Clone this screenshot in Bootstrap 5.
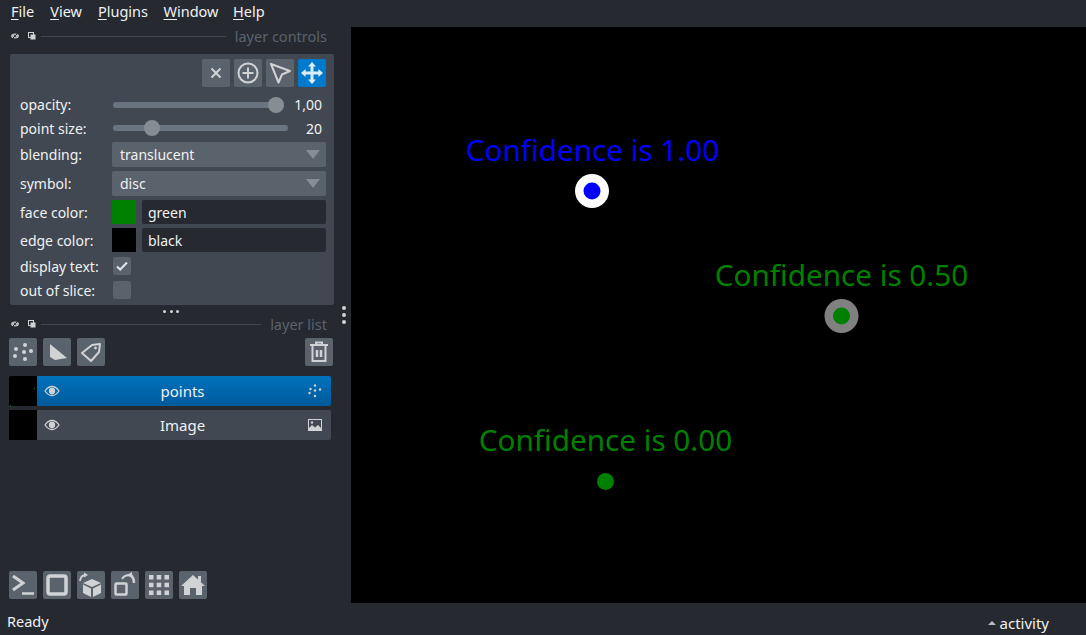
<!doctype html>
<html lang="en"><head><meta charset="utf-8"><title>napari</title>
<link rel="stylesheet" href="https://cdn.jsdelivr.net/npm/bootstrap@5.3.0/dist/css/bootstrap.min.css">
<style>
html,body{height:635px;overflow:hidden}
body{background:#262930;color:#f0f1f2;font-family:"Noto Sans",sans-serif;font-size:14px;line-height:20px}
.menu-bar{height:27px;padding-left:11px;padding-bottom:5px;font-size:14.5px}
.menu-bar span{color:#f0f1f2;margin-right:15.500px}
.menu-bar span:nth-child(2){margin-left:.5px}
.menu-bar span:nth-child(3){margin-left:.5px}
.menu-bar span:nth-child(4){margin-right:14.500px}
.menu-bar u{text-underline-offset:2px}
.work{height:576px}
.side{width:351px;flex:none;position:relative}
.title-row{height:18px;margin-left:11px;margin-right:24px;color:#5a626c;font-size:14.500px}
.title-row.second{margin-top:-2px}
.title-row .rule{flex:1;height:1px;background:#414851;margin:0 9px 0 0}
.ctrl-panel{margin:9px 17px 0 10px;height:251px;background:#414851;border-radius:2px;padding:5px 8px 0 10px}
.tool-btn{width:28px;height:28px;padding:0;border:0;border-radius:2px;background:#5a626c;display:flex;align-items:center;justify-content:center;flex:none}
.tool-btn.on{background:#007acc}
.ctl-row{display:flex;align-items:center;height:24px}
.ctl-row.first{margin-top:6px}
.ctl-row.combo-row{height:25px;margin-top:1px}
.ctl-row.combo-row.next{margin-top:4px}
.ctl-row.color-row{margin-top:4px}
.ctl-row.color-row.lbl-down .ctl-label{padding-top:1px}
.ctl-row.check-first{margin-top:2px}
.ctl-row.lbl-down .ctl-label{padding-top:2px}
.ctl-label{width:93px;flex:none;color:#f0f1f2;font-size:14px;white-space:nowrap}
.track{height:6px;border-radius:3px;background:#6a7480;position:relative}
.track.raise{margin-top:-2px}
.knob{position:absolute;top:-5px;width:16px;height:16px;border-radius:50%;background:#868e93}
.val{text-align:right;font-size:14px;flex:1;margin-right:4px}
.form-select.combo{height:25px;width:214px;margin-left:-1px;border:0;border-radius:2px;background-color:#5a626c;color:#f0f1f2;padding:0 0 0 8px;font-size:14px;line-height:25px;box-shadow:none;background-image:none}
.combo-wrap{position:relative}
.combo-arrow{position:absolute;right:6px;top:8px;width:0;height:0;border-left:7px solid transparent;border-right:7px solid transparent;border-top:9px solid #868e93}
.swatch{width:24px;height:24px;flex:none;margin-left:-1px}
.form-control.color-input{width:184px;height:24px;margin-left:6px;border:0;border-radius:2px;background:#262930;color:#f0f1f2;padding:0 6px;font-size:14px;box-shadow:none}
.chk{width:18px;height:18px;border-radius:2px;background:#5a626c;display:flex;align-items:center;justify-content:center}
.split-dots{height:12px;margin-left:9px;width:324px;gap:3.500px}
.split-dots i{width:3px;height:3px;border-radius:50%;background:#d1d2d4;display:block}
.v-handle{position:absolute;left:342px;top:279px;gap:3px}
.v-handle i{width:4px;height:4px;border-radius:50%;background:#d1d2d4;display:block}
.lyr-tools{margin:5px 18px 10px 9px;gap:6px}
.lyr-row{height:30px;margin:0 20px 4px 9px;border-radius:2px;background:#414851;align-items:center;font-size:15px}
.lyr-row.sel{background:linear-gradient(#0072bc,#005a9c)}
.thumb{width:28px;height:30px;background:#000;flex:none;display:block}
.eye{margin-left:7px}
.kind{margin-right:9px}
.lyr-name{flex:1;text-align:center;margin-left:-2px;padding-right:1px;color:#f0f1f2}
.dock-btns{position:absolute;left:9px;top:544px;gap:6px}
.view{flex:1;background:#000;position:relative;overflow:hidden}
.view svg{position:absolute;left:0;top:0}
.pt-label{position:absolute;font-size:29.700px;line-height:40px;white-space:nowrap;transform:translateX(-50%)}
.c-blue{color:#00f}
.c-green{color:green}
.status-bar{height:32px;padding:8px 37px 0 7px;font-size:14.500px}
.activity{display:flex;align-items:center;gap:4px;font-size:15px}
.up{width:0;height:0;border-left:4px solid transparent;border-right:4px solid transparent;border-bottom:4px solid #b5b8bc}
</style></head><body>
<div class="menu-bar d-flex align-items-center">
<span><u>F</u>ile</span><span><u>V</u>iew</span><span><u>P</u>lugins</span><span><u>W</u>indow</span><span><u>H</u>elp</span>
</div>
<div class="work d-flex">
<div class="side">
 <div class="title-row d-flex align-items-center">
  <svg width="30" height="10" viewBox="0 0 30 10"><ellipse cx="4" cy="5" rx="4" ry="2.500" fill="#b5b8bc"/><circle cx="4" cy="5" r="1" fill="#262930"/><path d="M1 8 7 2" stroke="#262930"/><rect x="17.500" y="1.500" width="5" height="5" fill="none" stroke="#d1d2d4"/><rect x="19.500" y="3.500" width="5" height="5" fill="#d1d2d4"/></svg>
  <div class="rule"></div><span>layer controls</span>
 </div>
 <div class="ctrl-panel">
  <div class="d-flex justify-content-end gap-1">
   <button class="tool-btn"><svg width="14" height="14" viewBox="0 0 14 14"><path d="M2.500 2.500l9 9M11.500 2.500l-9 9" stroke="#d1d2d4" stroke-width="2"/></svg></button>
   <button class="tool-btn"><svg width="24" height="24" viewBox="0 0 24 24" fill="none" stroke="#d1d2d4" stroke-width="2"><circle cx="12" cy="12" r="9.500"/><path d="M12 6.500v11M6.500 12h11"/></svg></button>
   <button class="tool-btn"><svg width="24" height="24" viewBox="0 0 24 24" fill="none" stroke="#d1d2d4" stroke-width="2" stroke-linejoin="round"><path d="M3 3 22 10l-8 3.500-3.500 8z"/></svg></button>
   <button class="tool-btn on"><svg width="22" height="22" viewBox="0 0 22 22" fill="#d9ecf8"><path d="M11 0l4 4.600h-2.500v4.900h4.900V7l4.600 4-4.600 4v-2.500h-4.900v4.900H15L11 22l-4-4.600h2.500v-4.900H4.600V15L0 11l4.600-4v2.500h4.900V4.600H7z"/></svg></button>
  </div>
  <div class="ctl-row first">
   <div class="ctl-label">opacity:</div><div class="track" style="width:171px"><div class="knob" style="left:155px"></div></div><div class="val">1,00</div>
  </div>
  <div class="ctl-row">
   <div class="ctl-label">point size:</div><div class="track raise" style="width:175px"><div class="knob" style="left:31px"></div></div><div class="val">20</div>
  </div>
  <div class="ctl-row combo-row"><div class="ctl-label">blending:</div><div class="combo-wrap"><select class="form-select combo"><option>translucent</option></select><div class="combo-arrow"></div></div></div>
  <div class="ctl-row combo-row next"><div class="ctl-label">symbol:</div><div class="combo-wrap"><select class="form-select combo"><option>disc</option></select><div class="combo-arrow"></div></div></div>
  <div class="ctl-row color-row lbl-down"><div class="ctl-label">face color:</div><div class="swatch" style="background:#008000"></div><input class="form-control color-input" value="green"></div>
  <div class="ctl-row color-row lbl-down"><div class="ctl-label">edge color:</div><div class="swatch" style="background:#000"></div><input class="form-control color-input" value="black"></div>
  <div class="ctl-row check-first lbl-down"><div class="ctl-label">display text:</div><div class="chk"><svg width="12" height="10" viewBox="0 0 12 10"><path d="M1 5.500 4.200 8.500 11 1.500" fill="none" stroke="#e4e5e6" stroke-width="2"/></svg></div></div>
  <div class="ctl-row lbl-down"><div class="ctl-label">out of slice:</div><div class="chk"></div></div>
 </div>
 <div class="split-dots d-flex justify-content-center align-items-center"><i></i><i></i><i></i></div>
 <div class="title-row second d-flex align-items-center">
  <svg width="30" height="10" viewBox="0 0 30 10"><ellipse cx="4" cy="5" rx="4" ry="2.500" fill="#b5b8bc"/><circle cx="4" cy="5" r="1" fill="#262930"/><path d="M1 8 7 2" stroke="#262930"/><rect x="17.500" y="1.500" width="5" height="5" fill="none" stroke="#d1d2d4"/><rect x="19.500" y="3.500" width="5" height="5" fill="#d1d2d4"/></svg>
  <div class="rule"></div><span>layer list</span>
 </div>
 <div class="lyr-tools d-flex">
  <button class="tool-btn"><svg width="20" height="20" viewBox="0 0 20 20" fill="#d1d2d4"><circle cx="12" cy="3" r="2"/><circle cx="3" cy="7" r="2"/><circle cx="11" cy="10" r="2"/><circle cx="18" cy="9" r="2"/><circle cx="2" cy="14" r="2"/><circle cx="12" cy="17" r="2"/></svg></button>
  <button class="tool-btn"><svg width="24" height="24" viewBox="0 0 24 24" fill="#d1d2d4"><path d="M5 4 22 18 10 20 5 17z"/></svg></button>
  <button class="tool-btn"><svg width="24" height="24" viewBox="0 0 24 24" fill="none" stroke="#d1d2d4" stroke-width="2" stroke-linejoin="round"><path d="M3 13 13 5l8-1-1 8-8 9z"/><circle cx="16.500" cy="8" r="1" fill="#d1d2d4" stroke-width="1"/></svg></button>
  <button class="tool-btn ms-auto"><svg width="20" height="24" viewBox="0 0 20 24" fill="none" stroke="#d1d2d4" stroke-width="2"><path d="M1 5h18M7 5V2.500h6V5"/><path d="M3.500 6v15h13V6"/><path d="M8 10v7M12 10v7" stroke-width="2.500"/></svg></button>
 </div>
 <div class="lyr-row sel d-flex">
  <svg class="thumb" viewBox="0 0 28 30"><rect x="0" y="0" width="1" height="1" fill="#0000ff"/><rect x="25" y="12" width="1" height="1" fill="#008000"/><rect x="1" y="29" width="1" height="1" fill="#008000"/></svg>
  <svg class="eye" width="16" height="12" viewBox="0 0 16 12" fill="none" stroke="#d1d2d4" stroke-width="1.300"><path d="M1 6c4-6 10-6 14 0-4 6-10 6-14 0z"/><circle cx="8" cy="6" r="2.500" fill="#d1d2d4"/></svg>
  <div class="lyr-name">points</div>
  <svg class="kind" width="14" height="14" viewBox="0 0 14 14" fill="#d1d2d4"><circle cx="7" cy="1.500" r="1.200"/><circle cx="2.500" cy="5" r="1.200"/><circle cx="7" cy="6.500" r="1.200"/><circle cx="12" cy="5.500" r="1.200"/><circle cx="1.500" cy="9" r="1.200"/><circle cx="7" cy="12" r="1.200"/></svg>
 </div>
 <div class="lyr-row d-flex">
  <svg class="thumb" viewBox="0 0 28 30"></svg>
  <svg class="eye" width="16" height="12" viewBox="0 0 16 12" fill="none" stroke="#d1d2d4" stroke-width="1.300"><path d="M1 6c4-6 10-6 14 0-4 6-10 6-14 0z"/><circle cx="8" cy="6" r="2.500" fill="#d1d2d4"/></svg>
  <div class="lyr-name">Image</div>
  <svg class="kind" width="14" height="12" viewBox="0 0 14 12"><rect x=".5" y=".5" width="13" height="11" fill="none" stroke="#d1d2d4"/><path d="M1 11V9l3-3 3 2.500L10 6l3 3v2z" fill="#d1d2d4"/><circle cx="4" cy="3.500" r="1.200" fill="#d1d2d4"/></svg>
 </div>
 <div class="dock-btns d-flex">
  <button class="tool-btn"><svg width="24" height="24" viewBox="0 0 24 24" fill="none" stroke="#d1d2d4" stroke-width="3"><path d="M2 3 12 10 2 17"/><path d="M11 20.500h12" stroke-width="2.500"/></svg></button>
  <button class="tool-btn"><svg width="22" height="22" viewBox="0 0 22 22" fill="none" stroke="#d1d2d4" stroke-width="3.500"><rect x="2" y="2" width="18" height="18" rx="2"/></svg></button>
  <button class="tool-btn"><svg width="26" height="26" viewBox="0 0 26 26"><path d="M14 7 23 11 14 15 5 11z" fill="#d1d2d4"/><path d="M5 12.500 13 16.500V25L5 21z" fill="#d1d2d4"/><path d="M15 16.500 23 12.500V21L15 25z" fill="#d1d2d4"/><path d="M2 9C2.500 5 4 3.500 7 3" fill="none" stroke="#d1d2d4" stroke-width="1.800"/><path d="M6 .5 10 3 6 5.500z" fill="#d1d2d4"/></svg></button>
  <button class="tool-btn"><svg width="26" height="26" viewBox="0 0 26 26" fill="none" stroke="#d1d2d4"><rect x="3.500" y="11.500" width="11" height="11" rx="1" stroke-width="2.500"/><path d="M10 7C12 4 15 3 18 3.500" stroke-width="2"/><path d="M22 11C22 8 21 5 18 2" stroke-width="2.500"/><path d="M15 3 20 0 20 6z" fill="#d1d2d4" stroke="none"/></svg></button>
  <button class="tool-btn"><svg width="22" height="22" viewBox="0 0 22 22" fill="#d1d2d4"><rect x="1" y="1" width="4.500" height="4.500"/><rect x="8.700" y="1" width="4.500" height="4.500"/><rect x="16.500" y="1" width="4.500" height="4.500"/><rect x="1" y="8.700" width="4.500" height="4.500"/><rect x="8.700" y="8.700" width="4.500" height="4.500"/><rect x="16.500" y="8.700" width="4.500" height="4.500"/><rect x="1" y="16.500" width="4.500" height="4.500"/><rect x="8.700" y="16.500" width="4.500" height="4.500"/><rect x="16.500" y="16.500" width="4.500" height="4.500"/></svg></button>
  <button class="tool-btn"><svg width="24" height="24" viewBox="0 0 24 24" fill="#d1d2d4"><path d="M12 2 24 13h-3v9h-6v-7H9v7H3v-9H0z"/><rect x="17" y="3" width="3" height="6"/></svg></button>
 </div>
 <div class="v-handle d-flex flex-column"><i></i><i></i><i></i></div>
</div>
<div class="view">
 <svg width="735" height="576" viewBox="0 0 735 576">
  <circle cx="241" cy="164" r="17" fill="#fff"/><circle cx="241" cy="164" r="8.500" fill="#0000ff"/>
  <circle cx="490.500" cy="289" r="17" fill="#808080"/><circle cx="490.500" cy="289" r="8.500" fill="#008000"/>
  <circle cx="254.500" cy="454.500" r="8.500" fill="#008000"/>
 </svg>
 <div class="pt-label c-blue" style="left:241.500px;top:103px">Confidence is 1.00</div>
 <div class="pt-label c-green" style="left:490.500px;top:228px">Confidence is 0.50</div>
 <div class="pt-label c-green" style="left:254.500px;top:393px">Confidence is 0.00</div>
</div>
</div>
<div class="status-bar d-flex justify-content-between"><span>Ready</span><span class="activity"><span class="up"></span>activity</span></div>
</body></html>
